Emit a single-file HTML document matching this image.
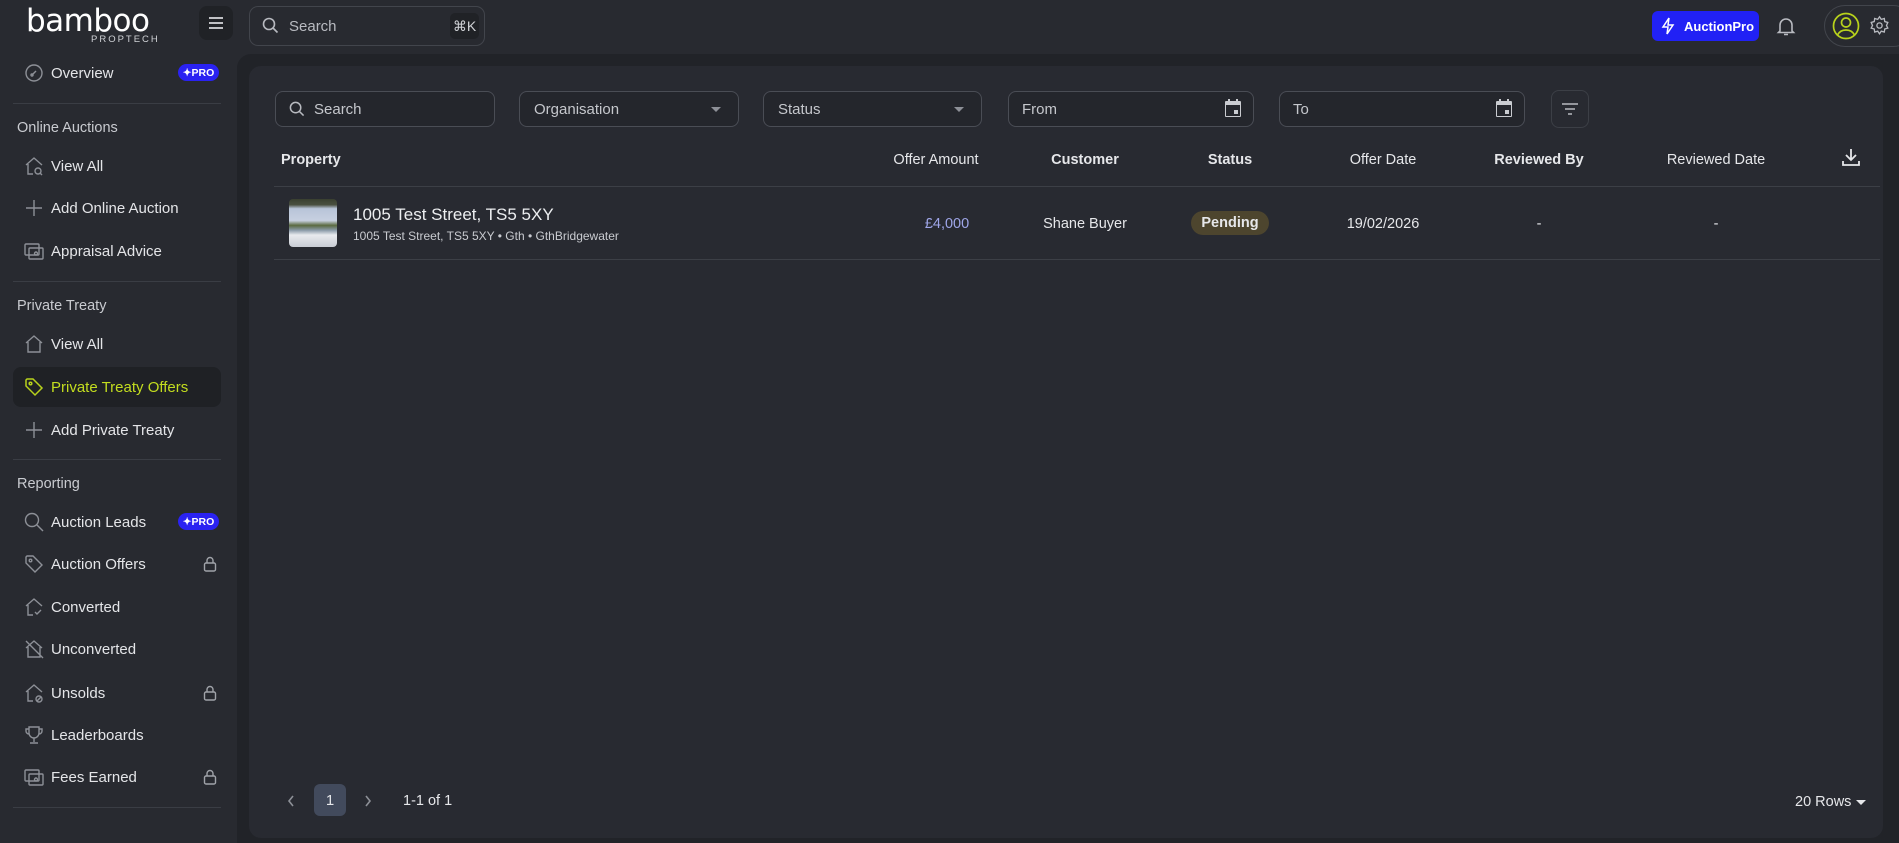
<!DOCTYPE html>
<html><head><meta charset="utf-8"><style>
*{box-sizing:border-box;margin:0;padding:0}
body{width:1899px;height:843px;background:#282a30;font-family:"Liberation Sans",sans-serif;color:#e6e7ea;position:relative;overflow:hidden}
.a{position:absolute}
.nav{position:absolute;left:0;width:237px;height:36px;display:flex;align-items:center;font-size:15px;color:#e4e5e8}
.nav svg{position:absolute;left:23px;width:22px;height:22px}
.nav span{position:absolute;left:51px}
.sec{position:absolute;left:17px;font-size:14.5px;color:#c9cbd0}
.div{position:absolute;left:13px;width:208px;height:1px;background:#3a3d44}
.pro{position:absolute;left:178px;width:41px;height:17px;border-radius:9px;background:#2a22f2;color:#fff;font-size:10.5px;font-weight:bold;display:flex;align-items:center;justify-content:center}
.lock{position:absolute;left:203px;width:14px;height:16px}
.inp{position:absolute;top:91px;height:36px;border:1px solid #4a4d55;border-radius:8px;background:#24262c;font-size:15px;color:#c5c7cc;display:flex;align-items:center}
.th{position:absolute;top:152px;font-size:14.5px;color:#e6e7ea;transform:translateX(-50%);white-space:nowrap}
.td{position:absolute;top:216px;font-size:14.5px;color:#e6e7ea;transform:translateX(-50%);white-space:nowrap}
</style></head><body>
<!-- logo -->
<div class="a" style="left:26px;top:4px;font-size:31px;color:#fff;letter-spacing:-0.5px;font-family:'DejaVu Sans',sans-serif;line-height:34px">bamboo</div>
<div class="a" style="left:91px;top:34px;font-size:9.5px;letter-spacing:2px;color:#d0d2d6">PROPTECH</div>
<div class="a" style="left:199px;top:6px;width:34px;height:34px;border-radius:8px;background:#202226"></div>
<svg class="a" style="left:207px;top:14px" width="18" height="18" viewBox="0 0 18 18" stroke="#d6d8dc" stroke-width="1.8"><path d="M2 4h14M2 9h14M2 14h14"/></svg>
<div class="a" style="left:249px;top:6px;width:236px;height:40px;border:1px solid #42454c;border-radius:9px"></div>
<svg class="a" style="left:262px;top:17px" width="17" height="17" viewBox="0 0 17 17" fill="none" stroke="#b8bac0" stroke-width="1.6"><circle cx="7" cy="7" r="5.5"/><path d="M11 11l4.5 4.5"/></svg>
<div class="a" style="left:289px;top:18px;font-size:15px;color:#b8bac0">Search</div>
<div class="a" style="left:450px;top:13px;width:29px;height:26px;border-radius:5px;background:#202226;font-size:14px;color:#d0d2d6;display:flex;align-items:center;justify-content:center">⌘K</div>
<div class="a" style="left:1652px;top:11px;width:107px;height:30px;border-radius:6px;background:#2121f5;color:#fff;font-size:13px;font-weight:bold;display:flex;align-items:center;padding-left:32px">AuctionPro</div>
<svg class="a" style="left:1660px;top:17px" width="16" height="18" viewBox="0 0 16 18" fill="none" stroke="#fff" stroke-width="1.5"><path d="M9 1L3 10h5l-1 7 6-9H8z"/></svg>
<svg class="a" style="left:1775px;top:15px" width="22" height="22" viewBox="0 0 22 22" fill="none" stroke="#b8bac0" stroke-width="1.6"><path d="M5 16V10a6 6 0 0112 0v6l1.5 1.5h-15z M9 19.5h4"/></svg>
<div class="a" style="left:1824px;top:5px;width:90px;height:42px;border:1px solid #42454c;border-radius:21px"></div>
<svg class="a" style="left:1832px;top:11px" width="28" height="30" viewBox="0 0 28 30" fill="none" stroke="#b8d21c" stroke-width="1.7"><circle cx="14" cy="15" r="12.5"/><circle cx="14" cy="11.5" r="4.5"/><path d="M5.5 24c2-4 5-5 8.5-5s6.5 1 8.5 5"/></svg>
<svg class="a" style="left:1869px;top:15px" width="21" height="21" viewBox="0 0 24 24" fill="none" stroke="#b8bac0" stroke-width="1.5"><circle cx="12" cy="12" r="3"/><path d="M12 2l2 3 3.5-1 .5 3.5 3.5 1-1.5 3.5 1.5 3-3.5 1-.5 3.5-3.5-1-2 3-2-3-3.5 1-.5-3.5-3.5-1 1.5-3-1.5-3.5 3.5-1 .5-3.5 3.5 1z"/></svg>

<!-- main panel -->
<div class="a" style="left:237px;top:54px;width:1662px;height:789px;background:#212328;border-radius:14px 0 0 0"></div>
<div class="a" style="left:249px;top:66px;width:1634px;height:772px;background:#282a31;border-radius:12px"></div>

<!-- sidebar -->
<div class="nav" style="top:55px"><svg viewBox="0 0 22 22" fill="none" stroke="#8d9097" stroke-width="1.4"><circle cx="11" cy="11" r="8"/><path d="M9 13l4-4"/><circle cx="9" cy="13" r="1"/></svg><span>Overview</span></div>
<div class="pro" style="top:64px">✦PRO</div>
<div class="div" style="top:103px"></div>
<div class="sec" style="top:120px">Online Auctions</div>
<div class="nav" style="top:148px"><svg viewBox="0 0 22 22" fill="none" stroke="#8d9097" stroke-width="1.4"><path d="M3 10l8-7 8 7M5 9v10h5"/><circle cx="15" cy="16" r="3"/><path d="M17 18l2 2"/></svg><span>View All</span></div>
<div class="nav" style="top:190px"><svg viewBox="0 0 22 22" fill="none" stroke="#8d9097" stroke-width="1.4"><path d="M11 3v16M3 11h16"/></svg><span>Add Online Auction</span></div>
<div class="nav" style="top:233px"><svg viewBox="0 0 22 22" fill="none" stroke="#8d9097" stroke-width="1.4"><rect x="2" y="4" width="14" height="11" rx="1"/><rect x="6" y="8" width="14" height="11" rx="1"/><circle cx="13" cy="13.5" r="1.5"/></svg><span>Appraisal Advice</span></div>
<div class="div" style="top:281px"></div>
<div class="sec" style="top:298px">Private Treaty</div>
<div class="nav" style="top:326px"><svg viewBox="0 0 22 22" fill="none" stroke="#8d9097" stroke-width="1.4"><path d="M3 10l8-7 8 7M5 9v10h12V9"/></svg><span>View All</span></div>
<div class="a" style="left:13px;top:367px;width:208px;height:40px;border-radius:8px;background:#1f2125"></div>
<div class="nav" style="top:369px;color:#c3dd1f"><svg viewBox="0 0 22 22" fill="none" stroke="#b8d21c" stroke-width="1.5"><path d="M3 4v6l9 9 7-7-9-9H4z"/><circle cx="7.5" cy="7.5" r="1.3"/></svg><span>Private Treaty Offers</span></div>
<div class="nav" style="top:412px"><svg viewBox="0 0 22 22" fill="none" stroke="#8d9097" stroke-width="1.4"><path d="M11 3v16M3 11h16"/></svg><span>Add Private Treaty</span></div>
<div class="div" style="top:459px"></div>
<div class="sec" style="top:476px">Reporting</div>
<div class="nav" style="top:504px"><svg viewBox="0 0 22 22" fill="none" stroke="#8d9097" stroke-width="1.4"><circle cx="9" cy="9" r="6.5"/><path d="M14 14l6 6"/></svg><span>Auction Leads</span></div>
<div class="pro" style="top:513px">✦PRO</div>
<div class="nav" style="top:546px"><svg viewBox="0 0 22 22" fill="none" stroke="#8d9097" stroke-width="1.4"><path d="M3 4v6l9 9 7-7-9-9H4z"/><circle cx="7.5" cy="7.5" r="1.3"/></svg><span>Auction Offers</span></div>
<div class="nav" style="top:589px"><svg viewBox="0 0 22 22" fill="none" stroke="#8d9097" stroke-width="1.4"><path d="M3 10l8-7 8 7M5 9v10h5M12 16l2 2 4-4"/></svg><span>Converted</span></div>
<div class="nav" style="top:631px"><svg viewBox="0 0 22 22" fill="none" stroke="#8d9097" stroke-width="1.4"><path d="M3 10l8-7 8 7M5 9v10h12V9M3 3l17 17"/></svg><span>Unconverted</span></div>
<div class="nav" style="top:675px"><svg viewBox="0 0 22 22" fill="none" stroke="#8d9097" stroke-width="1.4"><path d="M3 10l8-7 8 7M5 9v10h5"/><circle cx="16" cy="17" r="3"/><path d="M14 19l4-4"/></svg><span>Unsolds</span></div>
<div class="nav" style="top:717px"><svg viewBox="0 0 22 22" fill="none" stroke="#8d9097" stroke-width="1.4"><path d="M6 3h10v6a5 5 0 01-10 0zM6 5H3v2a3 3 0 003 3M16 5h3v2a3 3 0 01-3 3M11 14v4M7 19h8"/></svg><span>Leaderboards</span></div>
<div class="nav" style="top:759px"><svg viewBox="0 0 22 22" fill="none" stroke="#8d9097" stroke-width="1.4"><rect x="2" y="4" width="14" height="11" rx="1"/><rect x="6" y="8" width="14" height="11" rx="1"/><circle cx="13" cy="13.5" r="1.5"/></svg><span>Fees Earned</span></div>
<svg class="lock" style="top:556px" viewBox="0 0 14 16" fill="none" stroke="#a0a3a9" stroke-width="1.4"><rect x="1.5" y="7" width="11" height="8" rx="1.5"/><path d="M4 7V4.5a3 3 0 016 0V7"/></svg>
<svg class="lock" style="top:685px" viewBox="0 0 14 16" fill="none" stroke="#a0a3a9" stroke-width="1.4"><rect x="1.5" y="7" width="11" height="8" rx="1.5"/><path d="M4 7V4.5a3 3 0 016 0V7"/></svg>
<svg class="lock" style="top:769px" viewBox="0 0 14 16" fill="none" stroke="#a0a3a9" stroke-width="1.4"><rect x="1.5" y="7" width="11" height="8" rx="1.5"/><path d="M4 7V4.5a3 3 0 016 0V7"/></svg>
<div class="div" style="top:807px"></div>

<!-- filters -->
<div class="inp" style="left:275px;width:220px;padding-left:38px">Search</div>
<svg class="a" style="left:289px;top:101px" width="16" height="16" viewBox="0 0 17 17" fill="none" stroke="#b8bac0" stroke-width="1.6"><circle cx="7" cy="7" r="5.5"/><path d="M11 11l4.5 4.5"/></svg>
<div class="inp" style="left:519px;width:220px;padding-left:14px">Organisation</div>
<div class="a" style="left:711px;top:107px;border-left:5px solid transparent;border-right:5px solid transparent;border-top:5px solid #8d9097"></div>
<div class="inp" style="left:763px;width:219px;padding-left:14px">Status</div>
<div class="a" style="left:954px;top:107px;border-left:5px solid transparent;border-right:5px solid transparent;border-top:5px solid #8d9097"></div>
<div class="inp" style="left:1008px;width:246px;padding-left:13px">From</div>
<div class="inp" style="left:1279px;width:246px;padding-left:13px">To</div>
<svg class="a" style="left:1224px;top:98px" width="18" height="20" viewBox="0 0 18 20" fill="#c9cbd0"><path d="M2 3h14a1 1 0 011 1v14a1 1 0 01-1 1H2a1 1 0 01-1-1V4a1 1 0 011-1zM2 7v11h14V7z"/><rect x="4" y="1" width="2" height="3"/><rect x="12" y="1" width="2" height="3"/><rect x="10" y="12" width="4" height="4"/></svg>
<svg class="a" style="left:1495px;top:98px" width="18" height="20" viewBox="0 0 18 20" fill="#c9cbd0"><path d="M2 3h14a1 1 0 011 1v14a1 1 0 01-1 1H2a1 1 0 01-1-1V4a1 1 0 011-1zM2 7v11h14V7z"/><rect x="4" y="1" width="2" height="3"/><rect x="12" y="1" width="2" height="3"/><rect x="10" y="12" width="4" height="4"/></svg>
<div class="a" style="left:1551px;top:90px;width:38px;height:38px;border:1px solid #3c3f46;border-radius:8px"></div>
<svg class="a" style="left:1560px;top:101px" width="20" height="16" viewBox="0 0 20 16" stroke="#b8bac0" stroke-width="1.6"><path d="M2 3h16M5 8h10M8 13h4"/></svg>

<!-- table -->
<div class="a" style="left:281px;top:152px;font-size:14.5px;font-weight:bold">Property</div>
<div class="th" style="left:936px">Offer Amount</div>
<div class="th" style="left:1085px;font-weight:bold">Customer</div>
<div class="th" style="left:1230px;font-weight:bold">Status</div>
<div class="th" style="left:1383px">Offer Date</div>
<div class="th" style="left:1539px;font-weight:bold">Reviewed By</div>
<div class="th" style="left:1716px">Reviewed Date</div>
<svg class="a" style="left:1841px;top:147px" width="20" height="20" viewBox="0 0 20 20" fill="none" stroke="#e6e7ea" stroke-width="1.8"><path d="M10 2v11M5 8l5 5 5-5M2 14v4h16v-4"/></svg>
<div class="a" style="left:274px;top:186px;width:1606px;height:1px;background:#3c3f46"></div>
<div class="a" style="left:289px;top:199px;width:48px;height:48px;border-radius:4px;background:linear-gradient(#3a4030 0,#4a5040 12%,#b8c4d8 20%,#c7d0e0 45%,#5a6a40 55%,#8a9aa8 65%,#e8eaee 75%,#c8ccd4 100%)"></div>
<div class="a" style="left:353px;top:205px;font-size:17px;color:#eceef0">1005 Test Street, TS5 5XY</div>
<div class="a" style="left:353px;top:229px;font-size:12px;color:#c9cbd0">1005 Test Street, TS5 5XY • Gth • GthBridgewater</div>
<div class="td" style="left:947px;color:#9fa6e8">£4,000</div>
<div class="td" style="left:1085px">Shane Buyer</div>
<div class="a" style="left:1191px;top:211px;width:78px;height:24px;border-radius:12px;background:#4d452e;font-size:14.5px;font-weight:bold;display:flex;align-items:center;justify-content:center">Pending</div>
<div class="td" style="left:1383px">19/02/2026</div>
<div class="td" style="left:1539px">-</div>
<div class="td" style="left:1716px">-</div>
<div class="a" style="left:274px;top:259px;width:1606px;height:1px;background:#3c3f46"></div>

<!-- pagination -->
<svg class="a" style="left:286px;top:794px" width="10" height="14" viewBox="0 0 10 14" fill="none" stroke="#8d9097" stroke-width="1.6"><path d="M7 2L3 7l4 5"/></svg>
<div class="a" style="left:314px;top:784px;width:32px;height:32px;border-radius:6px;background:#424a5c;font-size:15px;display:flex;align-items:center;justify-content:center">1</div>
<svg class="a" style="left:363px;top:794px" width="10" height="14" viewBox="0 0 10 14" fill="none" stroke="#8d9097" stroke-width="1.6"><path d="M3 2l4 5-4 5"/></svg>
<div class="a" style="left:403px;top:793px;font-size:14.5px">1-1 of 1</div>
<div class="a" style="left:1795px;top:794px;font-size:14.5px">20 Rows</div>
<div class="a" style="left:1856px;top:800px;border-left:5px solid transparent;border-right:5px solid transparent;border-top:5px solid #e6e7ea"></div>
</body></html>
